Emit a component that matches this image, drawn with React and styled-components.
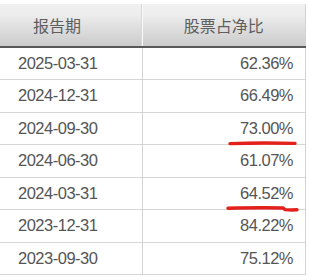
import styled, { createGlobalStyle } from 'styled-components';

const GlobalStyle = createGlobalStyle`
  html, body {
    margin: 0;
    padding: 0;
    background: #fff;
  }
`;

const rows = [
  { date: '2025-03-31', ratio: '62.36%' },
  { date: '2024-12-31', ratio: '66.49%' },
  { date: '2024-09-30', ratio: '73.00%', mark: 'flat' },
  { date: '2024-06-30', ratio: '61.07%' },
  { date: '2024-03-31', ratio: '64.52%', mark: 'step' },
  { date: '2023-12-31', ratio: '84.22%' },
  { date: '2023-09-30', ratio: '75.12%' },
];

const Wrap = styled.div`
  padding-top: 4px;
  width: 306px;
`;

const Table = styled.table`
  width: 306px;
  border-collapse: collapse;
  table-layout: fixed;
  font-family: 'Liberation Sans', Arial, sans-serif;
  color: #555;
  border-right: 1px solid #d2d2d2;
`;

const HeadCell = styled.th`
  height: 42px;
  padding: 0;
  padding-left: ${({ $left }) => $left || 0};
  text-align: ${({ $align }) => $align || 'center'};
  font-family: 'Noto Sans CJK SC', 'Liberation Sans', sans-serif;
  font-weight: 400;
  font-size: 16px;
  color: #5e5e5e;
  background: linear-gradient(#f0f0f0, #ededed 25%, #cbcbcb);
  border-bottom: 2px solid #585858;
  border-right: 1px solid #fafafa;
  box-shadow: inset -1px 0 0 #d8d8d8;

  &:last-child {
    border-right: 1px solid #d2d2d2;
    box-shadow: none;
  }
`;

const Row = styled.tr`
  height: 32.5px;
  border-bottom: 1px solid #d6d6d6;
`;

const Cell = styled.td`
  position: relative;
  padding: 0 ${({ $align }) => ($align === 'right' ? '12px' : '0')} 0 ${({ $align }) => ($align === 'right' ? '0' : '18px')};
  text-align: ${({ $align }) => $align || 'left'};
  font-size: 16.5px;
  letter-spacing: -0.5px;
  border-right: 1px solid #d2d2d2;
  white-space: nowrap;
`;

const Underline = styled.svg`
  position: absolute;
  left: 84px;
  bottom: -5px;
  width: 74px;
  height: 8px;
  overflow: visible;
  pointer-events: none;
`;

function Mark({ kind }) {
  const d =
    kind === 'step'
      ? 'M1 2.2 C 20 1.8, 40 1.6, 56 2 L 58 3.6 C 62 4, 66 4, 70 3.8'
      : 'M3 2.6 C 20 2, 45 1.8, 68 2.4';
  return (
    <Underline viewBox="0 0 74 8">
      <path d={d} fill="none" stroke="#e3201c" strokeWidth="3.4" strokeLinecap="round" />
    </Underline>
  );
}

export default function App() {
  return (
    <>
      <GlobalStyle />
      <Wrap>
        <Table>
          <colgroup>
            <col style={{ width: 142 }} />
            <col />
          </colgroup>
          <thead>
            <tr>
              <HeadCell $align="left" $left="33px">报告期</HeadCell>
              <HeadCell>股票占净比</HeadCell>
            </tr>
          </thead>
          <tbody>
            {rows.map((r) => (
              <Row key={r.date}>
                <Cell>{r.date}</Cell>
                <Cell $align="right">
                  {r.ratio}
                  {r.mark && <Mark kind={r.mark} />}
                </Cell>
              </Row>
            ))}
          </tbody>
        </Table>
      </Wrap>
    </>
  );
}
